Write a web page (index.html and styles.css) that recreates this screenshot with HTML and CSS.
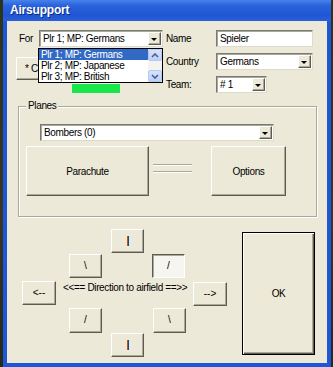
FILE: index.html
```html
<!DOCTYPE html>
<html lang="de">
<head>
  <meta charset="UTF-8">
  <title>Airsupport</title>
  <link rel="stylesheet" href="styles.css">
</head>
<body>
  <div class="window">
    <div class="titlebar">Airsupport</div>
    <div class="frame">
      <div class="client">

        <div class="top">
          <div class="left">
            <div class="for-row">
              <span class="for-lbl">For</span>
              <div class="combo for-combo"><span class="val">Plr 1; MP: Germans</span><span class="arrow"></span></div>
            </div>
            <!-- Knopf liegt unter der offenen Liste, nur der Anfang ist sichtbar -->
            <div class="btn change-btn">* C</div>
            <div class="green"></div>

            <!-- offene Liste der Combobox -->
            <div class="droplist">
              <ul class="items">
                <li class="sel">Plr 1; MP: Germans</li>
                <li>Plr 2; MP: Japanese</li>
                <li>Plr 3; MP: British</li>
              </ul>
              <div class="sbar">
                <span class="sb-btn"><svg width="8" height="5" viewBox="0 0 8 5"><polyline points="1,4 4,1 7,4" fill="none" stroke="#4d6185" stroke-width="1.6"/></svg></span>
                <span class="sb-track"></span>
                <span class="sb-btn"><svg width="8" height="5" viewBox="0 0 8 5"><polyline points="1,1 4,4 7,1" fill="none" stroke="#4d6185" stroke-width="1.6"/></svg></span>
              </div>
            </div>
          </div>

          <div class="right">
            <span class="lbl">Name</span>
            <div class="field"><span class="val">Spieler</span></div>
            <span class="lbl">Country</span>
            <div class="combo"><span class="val">Germans</span><span class="arrow"></span></div>
            <span class="lbl">Team:</span>
            <div class="combo team-combo"><span class="val">#&nbsp;1</span><span class="arrow"></span></div>
          </div>
        </div>

        <div class="group">
          <span class="group-title">Planes</span>
          <div class="combo planes-combo"><span class="val">Bombers (0)</span><span class="arrow"></span></div>
          <div class="plane-row">
            <div class="btn big-btn parachute">Parachute</div>
            <div class="sep">
              <span class="etch"></span>
              <span class="etch"></span>
            </div>
            <div class="btn big-btn options">Options</div>
          </div>
        </div>

        <div class="bottom">
          <div class="pad">
            <div class="pad-row r1">
              <div class="btn dir n">|</div>
            </div>
            <div class="pad-row r2">
              <div class="btn dir nw">\</div>
              <div class="btn dir ne pressed">/</div>
            </div>
            <div class="pad-row r3">
              <div class="btn dir w">&lt;--</div>
              <span class="dir-lbl">&lt;&lt;== Direction to airfield ==&gt;&gt;</span>
              <div class="btn dir e">--&gt;</div>
            </div>
            <div class="pad-row r4">
              <div class="btn dir sw">/</div>
              <div class="btn dir se">\</div>
            </div>
            <div class="pad-row r5">
              <div class="btn dir s">|</div>
            </div>
          </div>
          <div class="btn ok-btn">OK</div>
        </div>

      </div>
    </div>
  </div>
</body>
</html>
```
FILE: styles.css
```css
* { box-sizing: border-box; margin: 0; padding: 0; }
body {
  font-family: "Liberation Sans", Arial, sans-serif;
  font-size: 10px;
  letter-spacing: -0.35px;
  color: #000;
  background: linear-gradient(to bottom, #2c3519, #3a3622 60%, #232a16);
  width: 333px;
  height: 367px;
  overflow: hidden;
}
.window { width: 328px; margin-left: 3px; }
.titlebar {
  height: 21px;
  padding-left: 7px;
  background: linear-gradient(to bottom, #4683ec 0%, #2b63dc 25%, #1f56d4 70%, #2a5fd9 100%);
  color: #fff;
  font-size: 12px;
  font-weight: bold;
  letter-spacing: -0.2px;
  line-height: 21px;
  text-shadow: 1px 1px 0 #0b2a84;
}
.frame {
  border: 4px solid #1d56d8;
  border-top: 0;
  height: 346px;
}
.client {
  background-color: #ece9d8;
  height: 342px;
  padding-top: 9px;
}

/* Felder */
.field, .combo {
  display: flex;
  height: 17px;
  background-color: #fff;
  border: 1px solid;
  border-color: #7b7a70 #dedbcc #dedbcc #7b7a70;
  box-shadow: inset 1px 1px 0 #a9a79a;
}
.val {
  flex: 1;
  padding-left: 3px;
  line-height: 15px;
  white-space: nowrap;
  overflow: hidden;
}
.combo .arrow {
  position: relative;
  width: 13px;
  margin: 1px;
  background-color: #ece9d8;
  border: 1px solid;
  border-color: #fff #5e5c52 #5e5c52 #fff;
  box-shadow: inset -1px -1px 0 #aca899;
}
.combo .arrow::after {
  content: "";
  position: absolute;
  left: 2px;
  top: 5px;
  border-left: 3px solid transparent;
  border-right: 3px solid transparent;
  border-top: 3px solid #000;
}

/* Knöpfe */
.btn {
  background-color: #ece9d8;
  border: 1px solid;
  border-color: #fff #5e5c52 #5e5c52 #fff;
  box-shadow: inset -1px -1px 0 #aca899;
  text-align: center;
  white-space: nowrap;
}

/* oberer Bereich */
.top { display: flex; height: 64px; }
.left { position: relative; width: 147px; margin-left: 9px; }
.for-row { display: flex; align-items: center; height: 17px; }
.for-lbl { width: 23px; padding-left: 3px; }
.for-combo { width: 124px; }
.change-btn {
  margin-top: 10px;
  width: 130px;
  height: 23px;
  padding-left: 8px;
  text-align: left;
  line-height: 21px;
}
.green {
  margin: 4px 0 0 56px;
  width: 48px;
  height: 9px;
  background-color: #19e64b;
}
.droplist {
  position: absolute;
  left: 22px;
  top: 18px;
  width: 125px;
  height: 35px;
  display: flex;
  background-color: #fff;
  border: 1px solid #000;
}
.items { flex: 1; list-style: none; }
.items li {
  height: 11px;
  line-height: 11px;
  padding-left: 2px;
  white-space: nowrap;
}
.items li.sel { background-color: #316ac5; color: #fff; }
.sbar {
  width: 14px;
  display: flex;
  flex-direction: column;
  background-color: #f4f3ee;
}
.sb-btn {
  height: 12px;
  display: flex;
  align-items: center;
  justify-content: center;
  background: linear-gradient(to bottom, #d7e3fd, #bccffa);
  border: 1px solid #b4c8f4;
  border-radius: 2px;
}
.sb-track { flex: 1; }

.right {
  margin-left: 3px;
  width: 147px;
  display: grid;
  grid-template-columns: 50px 97px;
  grid-auto-rows: 17px;
  row-gap: 6px;
  align-items: center;
  align-content: start;
}
.team-combo { width: 51px; }

/* Gruppe Planes */
.group {
  position: relative;
  margin: 12px 0 0 11px;
  width: 299px;
  height: 111px;
  border: 1px solid #aca899;
  box-shadow: inset 1px 1px 0 #fff, 1px 1px 0 #fff;
}
.group-title {
  position: absolute;
  top: -7px;
  left: 7px;
  padding: 0 2px;
  line-height: 12px;
  background-color: #ece9d8;
}
.planes-combo { margin: 17px 0 0 21px; width: 234px; }
.plane-row { display: flex; margin-top: 5px; height: 50px; }
.big-btn { height: 50px; line-height: 50px; }
.parachute { margin-left: 7px; width: 123px; }
.sep {
  margin-left: 4px;
  width: 39px;
  padding-top: 18px;
  display: flex;
  flex-direction: column;
  gap: 5px;
}
.etch {
  height: 2px;
  border-top: 1px solid #aca899;
  border-bottom: 1px solid #fff;
}
.options { margin-left: 19px; width: 75px; }

/* Richtung */
.bottom { display: flex; align-items: flex-start; margin-top: 12px; }
.pad { margin-left: 15px; width: 205px; }
.pad-row { display: flex; height: 24px; }
.dir {
  width: 33px;
  height: 24px;
  line-height: 22px;
  letter-spacing: 0;
}
.n, .s { padding-left: 1px; text-shadow: 0 0 0 #000; }
.r1, .r5 { padding-left: 89px; }
.r2 { margin-top: 1px; padding-left: 47px; }
.r2 .ne { margin-left: 50px; }
.r3 { margin-top: 3px; }
.r3 .w { width: 34px; }
.dir-lbl {
  width: 130px;
  margin: 1px 0 0 7px;
  line-height: 12px;
  white-space: nowrap;
}
.r3 .e { margin-top: 1px; width: 34px; }
.r4 { margin-top: 3px; padding-left: 47px; height: 25px; }
.r4 .dir { height: 25px; }
.r4 .se { margin-left: 51px; }
.pressed {
  background-color: #f6f5f0;
  border-color: #5e5c52 #fff #fff #5e5c52;
  box-shadow: inset 1px 1px 0 #aca899;
}
.ok-btn {
  margin: 3px 0 0 15px;
  width: 73px;
  height: 123px;
  line-height: 121px;
  border: 1px solid #000;
  box-shadow: inset 1px 1px 0 #fff, inset -1px -1px 0 #5e5c52, inset -2px -2px 0 #aca899;
}
```
